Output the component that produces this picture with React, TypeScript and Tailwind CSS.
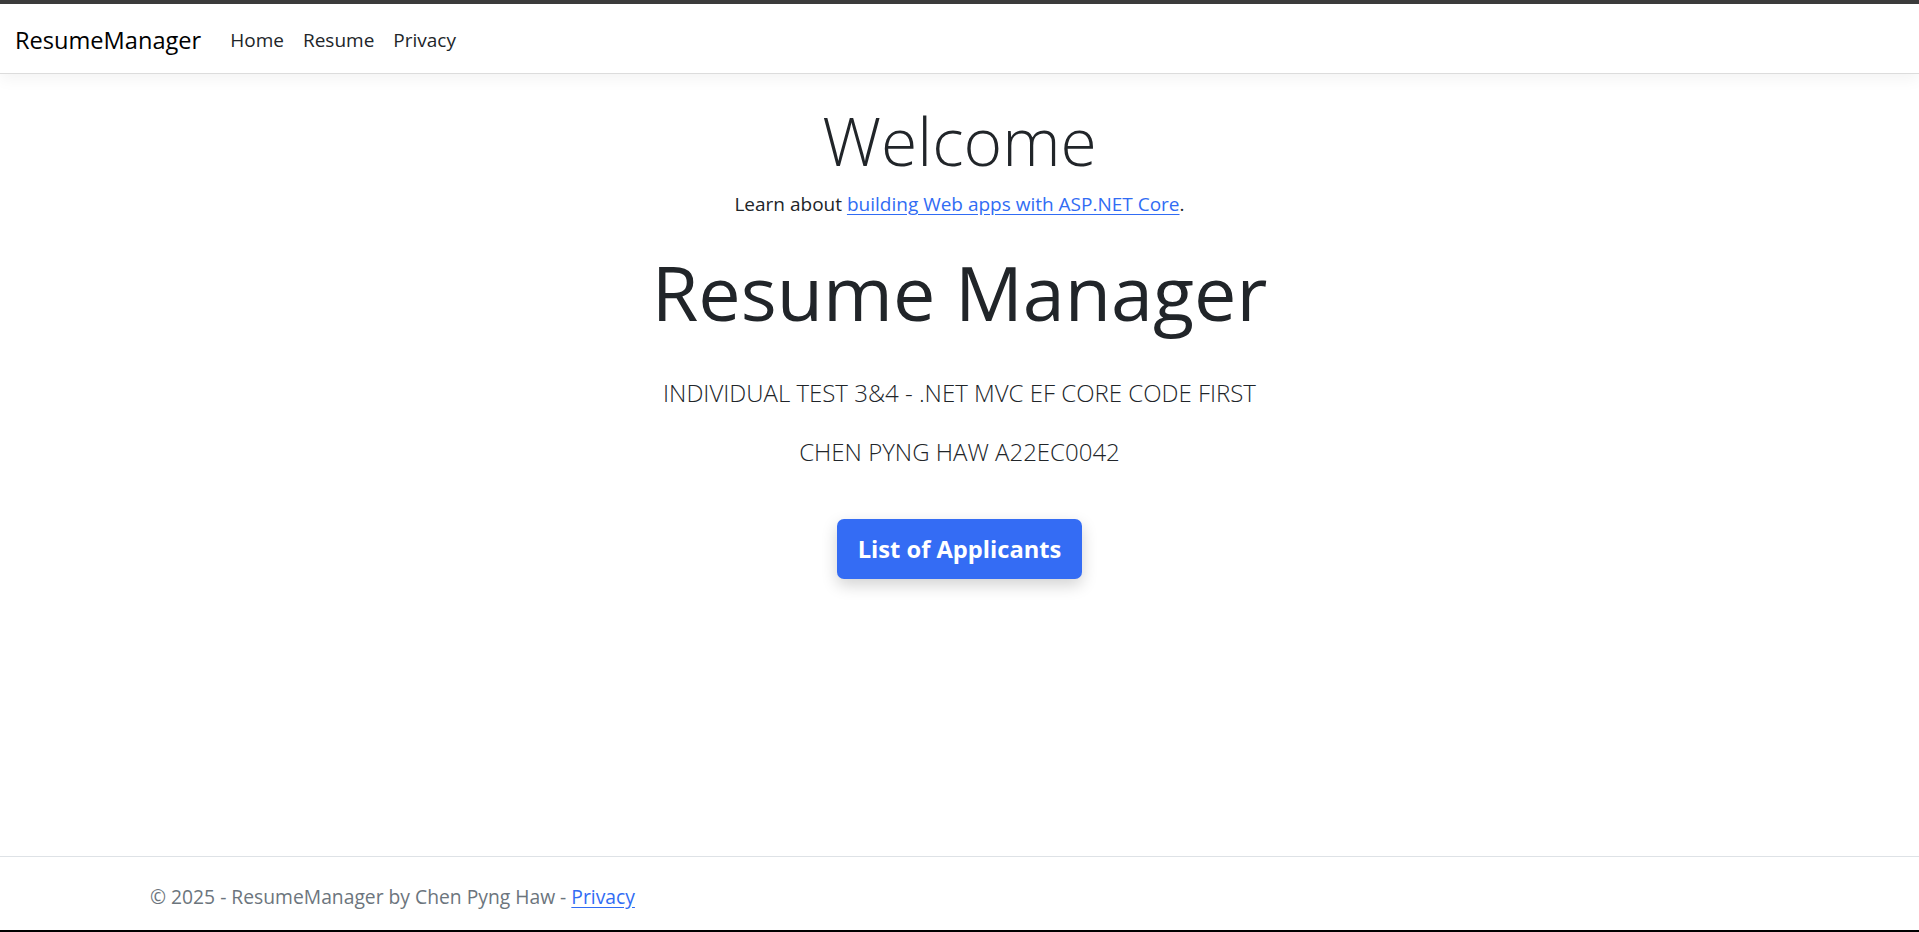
import React from "react";

export default function App() {
  const font = { fontFamily: '"Open Sans", "Noto Sans", sans-serif' };
  return (
    <div className="h-[932px] flex flex-col bg-white text-[#212529] overflow-hidden" style={font}>
      <div className="h-[4px] bg-[#3c3c3c]" />
      <header className="h-[70px] flex items-center pt-[4px] px-[15px] border-b border-[#dcdcdc] shadow-[0_5px_15px_rgba(0,0,0,0.05)] bg-white relative z-10">
        <a className="text-[23.6px] text-black leading-none mr-[29px]">ResumeManager</a>
        <nav className="flex items-center gap-[19px] text-[19px] text-[#212529]">
          <a>Home</a>
          <a>Resume</a>
          <a>Privacy</a>
        </nav>
      </header>
      <main className="flex-1 flex flex-col items-center text-center">
        <h1 className="text-[66px] font-light leading-[1.2] mt-[27px]">Welcome</h1>
        <p className="text-[19px] leading-[1.5] mt-[10px]">
          Learn about{" "}
          <a className="text-[#316cf4] underline underline-offset-[3px]">building Web apps with ASP.NET Core</a>.
        </p>
        <h2 className="text-[75.5px] font-normal leading-[1.2] mt-[28px]">Resume Manager</h2>
        <p className="text-[24px] font-light leading-[1.5] mt-[38px]">INDIVIDUAL TEST 3&amp;4 - .NET MVC EF CORE CODE FIRST</p>
        <p className="text-[24px] font-light leading-[1.5] mt-[23px]">CHEN PYNG HAW A22EC0042</p>
        <button className="mt-[49px] w-[245px] h-[60px] rounded-[7px] bg-[#346cf4] text-white text-[23.7px] font-bold shadow-[0_6px_16px_rgba(0,0,0,0.18)]">
          List of Applicants
        </button>
      </main>
      <footer className="h-[74px] border-t border-[#dee2e6] flex items-center pt-[7px] pl-[150px] text-[19.3px] text-[#6c757d]">
        <span>
          © 2025 - ResumeManager by Chen Pyng Haw -{" "}
          <a className="text-[#316cf4] underline underline-offset-[3px]">Privacy</a>
        </span>
      </footer>
      <div className="h-[2px] bg-black" />
    </div>
  );
}
